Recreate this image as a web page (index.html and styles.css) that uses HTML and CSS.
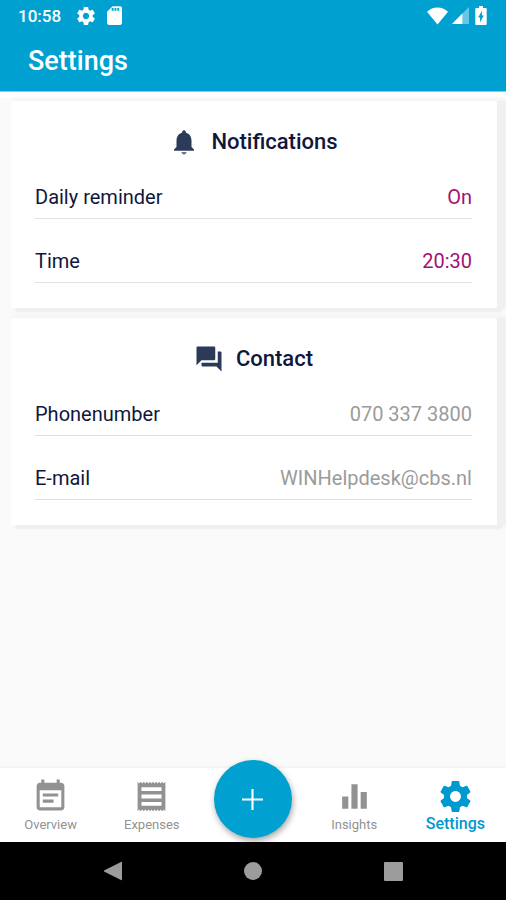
FILE: index.html
```html
<!DOCTYPE html>
<html lang="en">
<head>
<meta charset="utf-8">
<meta name="viewport" content="width=device-width, initial-scale=1">
<title>Settings</title>
<link rel="stylesheet" href="styles.css">
</head>
<body>
<div class="app">
  <header class="header">
    <div class="status">
      <span class="clock">10:58</span>
      <svg class="status-gear" viewBox="2 2 20 20" aria-hidden="true"><path d="M19.43 12.98c.04-.32.07-.64.07-.98s-.03-.66-.07-.98l2.11-1.65c.19-.15.24-.42.12-.64l-2-3.46c-.12-.22-.39-.3-.61-.22l-2.49 1c-.52-.4-1.08-.73-1.69-.98l-.38-2.65C14.46 2.18 14.25 2 14 2h-4c-.25 0-.46.18-.49.42l-.38 2.65c-.61.25-1.17.59-1.69.98l-2.49-1c-.23-.09-.49 0-.61.22l-2 3.46c-.13.22-.07.49.12.64l2.11 1.65c-.04.32-.07.65-.07.98s.03.66.07.98l-2.11 1.65c-.19.15-.24.42-.12.64l2 3.46c.12.22.39.3.61.22l2.49-1c.52.4 1.08.73 1.69.98l.38 2.65c.03.24.24.42.49.42h4c.25 0 .46-.18.49-.42l.38-2.65c.61-.25 1.17-.59 1.69-.98l2.49 1c.23.09.49 0 .61-.22l2-3.46c.12-.22.07-.49-.12-.64l-2.11-1.65zM12 15.5c-1.93 0-3.5-1.57-3.5-3.5s1.57-3.5 3.5-3.5 3.5 1.57 3.5 3.5-1.57 3.5-3.5 3.5z"/></svg>
      <svg class="status-card" viewBox="4 2 16 20" aria-hidden="true"><path d="M18 2h-8L4 8v12c0 1.100.9 2 2 2h12c1.100 0 2-.9 2-2V4c0-1.100-.9-2-2-2zm-7 5H9V4h2v3zm3 0h-2V4h2v3zm3 0h-2V4h2v3z"/></svg>
      <span class="status-right">
        <svg class="wifi" viewBox="0 0 22 18" aria-hidden="true"><path d="M11 18 0 4.500C3 1.500 7 0 11 0s8 1.500 11 4.500z"/></svg>
        <svg class="signal" viewBox="0 0 18 18" aria-hidden="true"><path d="M0 18 18 0v18z" opacity=".4"/><path d="M0 18 11 7v11z"/></svg>
        <svg class="battery" viewBox="0 0 12 20" aria-hidden="true"><path fill-rule="evenodd" d="M4 0h4v2h3a1 1 0 0 1 1 1v16a1 1 0 0 1-1 1H1a1 1 0 0 1-1-1V3a1 1 0 0 1 1-1h3zM7 5 3 12h2v5l4-7H7z"/></svg>
      </span>
    </div>
    <h1 class="title">Settings</h1>
  </header>

  <main class="content">
    <section class="card">
      <h2 class="card-title">
        <svg class="card-icon" viewBox="0 0 24 24" aria-hidden="true"><path d="M12 22c1.100 0 2-.9 2-2h-4c0 1.100.89 2 2 2z" opacity=".7"/><path d="M18 16v-5c0-3.070-1.640-5.640-4.500-6.320V4c0-.83-.67-1.500-1.500-1.500s-1.500.67-1.500 1.500v.68C7.630 5.360 6 7.920 6 11v5l-2 2v1h16v-1l-2-2z"/></svg>
        Notifications
      </h2>
      <div class="row"><label for="reminder">Daily reminder</label><button class="value" id="reminder" type="button">On</button></div>
      <div class="row"><label for="time">Time</label><button class="value" id="time" type="button">20:30</button></div>
    </section>

    <section class="card">
      <h2 class="card-title">
        <svg class="card-icon" viewBox="0 0 24 24" aria-hidden="true"><path d="M21 6h-2v9H6v2c0 .55.45 1 1 1h11l4 4V7c0-.55-.45-1-1-1zm-4 6V3c0-.55-.45-1-1-1H3c-.55 0-1 .45-1 1v14l4-4h10c.55 0 1-.45 1-1z"/></svg>
        Contact
      </h2>
      <div class="row"><span>Phonenumber</span><a class="value muted" href="tel:0703373800">070 337 3800</a></div>
      <div class="row"><span>E-mail</span><a class="value muted" href="mailto:WINHelpdesk@cbs.nl">WINHelpdesk@cbs.nl</a></div>
    </section>
  </main>

  <nav class="tabs">
    <a class="tab" href="#overview">
      <svg viewBox="0 0 24 24" aria-hidden="true"><path d="M17 10H7v2h10v-2zm2-7h-1V1h-2v2H8V1H6v2H5c-1.110 0-1.990.9-1.990 2L3 19c0 1.100.89 2 2 2h14c1.100 0 2-.9 2-2V5c0-1.100-.9-2-2-2zm0 16H5V8h14v11zm-5-5H7v2h7v-2z"/></svg>
      <span>Overview</span>
    </a>
    <a class="tab" href="#expenses">
      <svg viewBox="0 0 24 24" aria-hidden="true"><path d="M18.500 18h-13v-2.500h13zm0-4.700h-13v-2.600h13zm0-4.800h-13V6h13zM3 21.500l1-1 1 1 1-1 1 1 1-1 1 1 1-1 1 1 1-1 1 1 1-1 1 1 1-1 1 1 1-1 1 1 1-1 1 1v-19l-1 1-1-1-1 1-1-1-1 1-1-1-1 1-1-1-1 1-1-1-1 1-1-1-1 1-1-1-1 1-1-1-1 1-1-1z"/></svg>
      <span>Expenses</span>
    </a>
    <div class="add-slot">
      <button class="add" type="button" aria-label="Add">
        <svg viewBox="0 0 20 20" aria-hidden="true"><path d="M9 0h2v9h9v2h-9v9H9v-9H0V9h9z"/></svg>
      </button>
    </div>
    <a class="tab" href="#insights">
      <svg viewBox="0 0 24 24" aria-hidden="true"><path d="M10 20h4V4h-4v16zm-6 0h4v-8H4v8zM16 9v11h4V9h-4z"/></svg>
      <span>Insights</span>
    </a>
    <a class="tab active" href="#settings" aria-current="page">
      <svg viewBox="0 0 24 24" aria-hidden="true"><path d="M19.43 12.98c.04-.32.07-.64.07-.98s-.03-.66-.07-.98l2.11-1.65c.19-.15.24-.42.12-.64l-2-3.46c-.12-.22-.39-.3-.61-.22l-2.49 1c-.52-.4-1.08-.73-1.69-.98l-.38-2.65C14.46 2.18 14.25 2 14 2h-4c-.25 0-.46.18-.49.42l-.38 2.65c-.61.25-1.17.59-1.69.98l-2.49-1c-.23-.09-.49 0-.61.22l-2 3.46c-.13.22-.07.49.12.64l2.11 1.65c-.04.32-.07.65-.07.98s.03.66.07.98l-2.11 1.65c-.19.15-.24.42-.12.64l2 3.46c.12.22.39.3.61.22l2.49-1c.52.4 1.08.73 1.69.98l.38 2.65c.03.24.24.42.49.42h4c.25 0 .46-.18.49-.42l.38-2.65c.61-.25 1.17-.59 1.69-.98l2.49 1c.23.09.49 0 .61-.22l2-3.46c.12-.22.07-.49-.12-.64l-2.11-1.65zM12 15.5c-1.93 0-3.5-1.57-3.5-3.5s1.57-3.5 3.5-3.5 3.5 1.57 3.5 3.5-1.57 3.5-3.5 3.5z"/></svg>
      <span>Settings</span>
    </a>
  </nav>

  <div class="system">
    <button type="button" aria-label="Back"><svg viewBox="0 0 20 20" aria-hidden="true"><path d="M19 1v18a1 1 0 0 1-1 0L2 11a1 1 0 0 1 0-2L18 1a1 1 0 0 1 1 0z"/></svg></button>
    <button type="button" aria-label="Home"><svg viewBox="0 0 20 20" aria-hidden="true"><circle cx="10" cy="10" r="9"/></svg></button>
    <button type="button" aria-label="Recent apps"><svg viewBox="0 0 20 20" aria-hidden="true"><rect width="19" height="19" x="1" y="1" rx="1"/></svg></button>
  </div>
</div>
</body>
</html>
```
FILE: styles.css
```css
* {
  box-sizing: border-box;
}

body {
  margin: 0;
  background: #fafafa;
  color: #10173c;
  font-family: Roboto, "Liberation Sans", sans-serif;
}

svg {
  display: block;
  flex: none;
  fill: currentColor;
}

button {
  padding: 0;
  border: 0;
  background: none;
  color: inherit;
  font: inherit;
  cursor: pointer;
}

a {
  color: inherit;
  text-decoration: none;
}

.app {
  display: flex;
  flex-direction: column;
  min-height: 100vh;
}

.header {
  padding-bottom: 10px;
  background: #00a1d0;
  color: #fff;
}

.status {
  display: flex;
  align-items: center;
  height: 31px;
  padding: 0 19px 0 18px;
}

.clock {
  margin-right: 16px;
  font-size: 17px;
  font-weight: 500;
}

.status-gear {
  width: 18px;
  height: 18px;
  margin-right: 12px;
}

.status-card {
  width: 15px;
  height: 19px;
}

.status-right {
  display: flex;
  align-items: center;
  gap: 4px;
  margin-left: auto;
}

.wifi {
  width: 21px;
  height: 18px;
}

.signal {
  width: 17px;
  height: 17px;
}

.battery {
  width: 12px;
  height: 19px;
  margin-left: 2px;
}

.title {
  margin: 11px 28px 0;
  font-size: 27px;
  font-weight: 500;
  line-height: 39px;
}

.content {
  display: flex;
  flex: 1;
  flex-direction: column;
  gap: 10px;
  padding: 9px 9px 24px 11px;
  border-top: 1px solid #7fcfe7;
  overflow: hidden;
  box-shadow: inset 0 6px #fff;
}

.card {
  padding: 23px 25px 25px 24px;
  border-radius: 2px;
  background: #fff;
  box-shadow: 9px 0 1px #f0f0f0, 5px 4px 1px #efefef, 5px 0 3px 4px #f6f6f6;
}

.card-title {
  display: flex;
  align-items: center;
  justify-content: center;
  gap: 12px;
  margin: 0 0 9px;
  font-size: 22px;
  font-weight: 500;
  line-height: 36px;
}

.card-icon {
  width: 30px;
  height: 30px;
  color: #2b3a59;
}

.row {
  display: flex;
  align-items: center;
  justify-content: space-between;
  height: 50px;
  padding-top: 6px;
  border-bottom: 1px solid #e0e0e0;
  font-size: 20px;
}

.row + .row {
  height: 64px;
  padding-top: 20px;
}

.value {
  color: #a50f73;
}

.muted {
  color: #9b9b9b;
}

.tabs {
  display: grid;
  grid-template-columns: repeat(5, 1fr);
  height: 74px;
  background: #fff;
  box-shadow: 0 -1px 2px #f0f0f0;
}

.tab {
  display: flex;
  flex-direction: column;
  align-items: center;
  padding-top: 10px;
  color: #929292;
  font-size: 13px;
  line-height: 20px;
}

.tab svg {
  width: 37px;
  height: 37px;
}

.active {
  color: #0099cf;
  font-size: 16px;
  font-weight: 500;
  line-height: 18px;
}

.add-slot {
  display: flex;
  justify-content: center;
}

.add {
  display: flex;
  align-items: center;
  justify-content: center;
  width: 78px;
  height: 78px;
  margin-top: -8px;
  border-radius: 50%;
  background: #00a1d0;
  color: #fff;
  box-shadow: 1px 3px 6px rgba(0, 0, 0, 0.35);
}

.add svg {
  width: 21px;
  height: 21px;
}

.system {
  display: flex;
  align-items: center;
  justify-content: center;
  gap: 120px;
  height: 58px;
  background: #000;
  color: #9c9c9c;
}

.system svg {
  width: 20px;
  height: 20px;
}
```
